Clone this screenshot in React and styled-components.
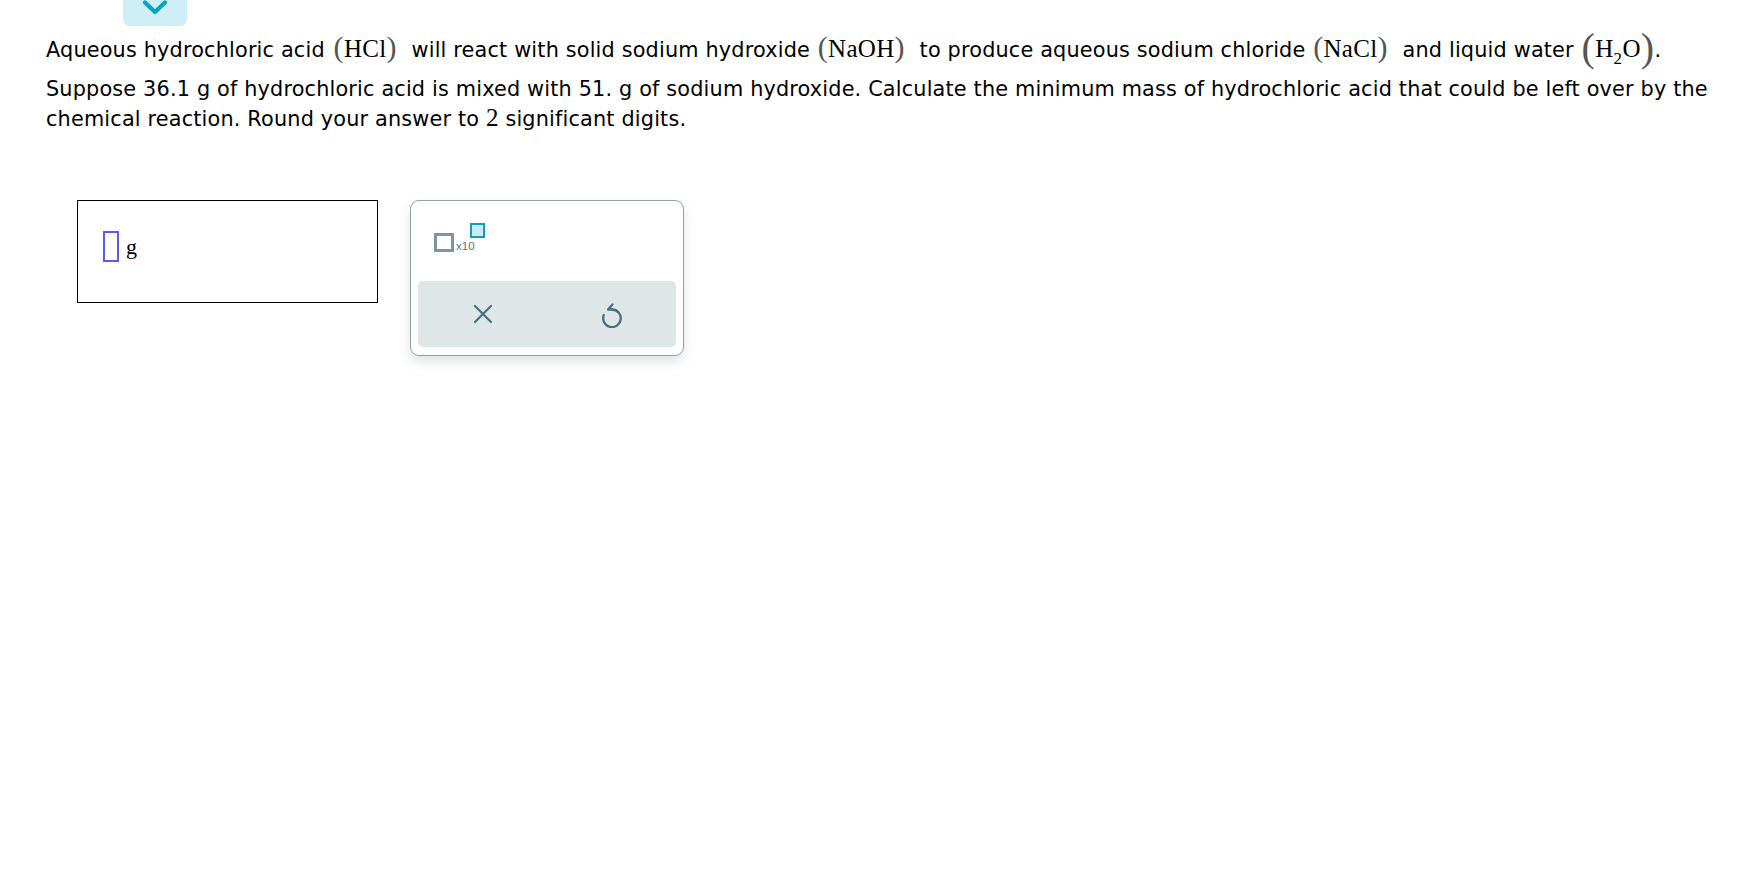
import React from 'react';
import styled, { createGlobalStyle } from 'styled-components';

const GlobalStyle = createGlobalStyle`
  html, body {
    margin: 0;
    padding: 0;
    background: #ffffff;
  }
  body {
    font-family: "DejaVu Sans", Verdana, sans-serif;
    color: #000000;
  }
`;

const Page = styled.div`
  display: flex;
  flex-direction: column;
  padding: 0 10px 0 46px;
  min-height: 873px;
  box-sizing: border-box;
`;

const TopBar = styled.div`
  display: flex;
  height: 26px;
  padding-left: 77px;
`;

const ToggleTab = styled.button`
  width: 64px;
  height: 26px;
  border: none;
  padding: 0;
  background: #cdeef4;
  border-radius: 0 0 7px 7px;
  display: flex;
  align-items: flex-start;
  justify-content: center;
  cursor: pointer;
`;

const Line = styled.div`
  font-size: 20.8px;
  letter-spacing: 0.17px;
  line-height: ${p => p.$lh || 30}px;
  margin-top: ${p => p.$mt || 0}px;
  white-space: nowrap;
`;

const Math = styled.span`
  font-family: "Liberation Serif", "Times New Roman", serif;
  font-size: 25px;
  letter-spacing: 0.3px;
  line-height: 0;
  margin: 0 ${p => p.$mr ?? 8}px 0 ${p => p.$ml ?? 3}px;
`;

const Paren = styled.span`
  font-size: ${p => (p.$big ? 40 : 30)}px;
  color: #555555;
  vertical-align: ${p => (p.$big ? -4 : 0)}px;
`;

const Sub = styled.span`
  font-size: 17px;
  vertical-align: -7px;
`;

const Num = styled.span`
  font-family: "Liberation Serif", "Times New Roman", serif;
  font-size: 25px;
  line-height: 0;
`;

const AnswerRow = styled.div`
  display: flex;
  align-items: flex-start;
  gap: 32px;
  margin: 66px 0 0 31px;
`;

const AnswerBox = styled.div`
  width: 301px;
  height: 103px;
  box-sizing: border-box;
  border: 1px solid #000000;
  display: flex;
  align-items: flex-start;
  padding: 30px 0 0 25px;
`;

const Slot = styled.span`
  display: block;
  width: 16px;
  height: 31px;
  box-sizing: border-box;
  border: 2px solid #5b5bf7;
`;

const Unit = styled.span`
  font-family: "Liberation Serif", "Times New Roman", serif;
  font-size: 22px;
  line-height: 1;
  margin: 5px 0 0 7px;
`;

const Panel = styled.div`
  width: 274px;
  height: 156px;
  box-sizing: border-box;
  border: 1px solid #8ea3ab;
  border-radius: 9px;
  background: #ffffff;
  box-shadow: 0 6px 12px rgba(40, 60, 70, 0.14);
  display: flex;
  flex-direction: column;
  justify-content: space-between;
  padding: 22px 7px 8px 7px;
`;

const PowerButton = styled.button`
  display: flex;
  align-items: flex-start;
  border: none;
  background: none;
  padding: 0 0 0 16px;
  cursor: pointer;
`;

const BaseBox = styled.span`
  display: block;
  width: 20px;
  height: 19px;
  box-sizing: border-box;
  border: 3px solid #7d959e;
  margin-top: 10px;
`;

const PowerText = styled.span`
  font-family: "Liberation Sans", Arial, sans-serif;
  font-size: 11.5px;
  line-height: 1;
  color: #587480;
  margin: 18px 0 0 2px;
`;

const ExpBox = styled.span`
  display: block;
  width: 15px;
  height: 15px;
  box-sizing: border-box;
  border: 2px solid #159cb6;
  background: #c7edf3;
  margin-left: -5px;
`;

const ActionBar = styled.div`
  display: flex;
  height: 66px;
  background: #dfe6e8;
  border-radius: 5px;
`;

const ActionButton = styled.button`
  flex: 1;
  display: flex;
  align-items: center;
  justify-content: center;
  border: none;
  background: none;
  padding: 0;
  cursor: pointer;
`;

const Chem = ({ children, big, ml, mr }) => (
  <Math $ml={ml} $mr={mr}>
    <Paren $big={big}>(</Paren>
    {children}
    <Paren $big={big}>)</Paren>
  </Math>
);

export default function App() {
  return (
    <>
      <GlobalStyle />
      <Page>
        <TopBar>
          <ToggleTab aria-label="collapse">
            <svg width="28" height="18" viewBox="0 0 28 18">
              <polyline points="4,2.5 14,12 24,2.5" fill="none" stroke="#0aa2c6" strokeWidth="4.2" strokeLinecap="round" strokeLinejoin="round" />
            </svg>
          </ToggleTab>
        </TopBar>

        <Line $lh={40} $mt={4}>
          Aqueous hydrochloric acid <Chem ml={2} mr={8}>HCl</Chem> will react with solid sodium hydroxide <Chem ml={1} mr={8}>NaOH</Chem> to produce aqueous sodium chloride <Chem ml={1} mr={8}>NaCl</Chem> and liquid water <Chem big ml={1} mr={0}>H<Sub>2</Sub>O</Chem>.
        </Line>
        <Line $mt={4}>
          Suppose 36.1 g of hydrochloric acid is mixed with 51. g of sodium hydroxide. Calculate the minimum mass of hydrochloric acid that could be left over by the
        </Line>
        <Line>
          chemical reaction. Round your answer to <Num>2</Num> significant digits.
        </Line>

        <AnswerRow>
          <AnswerBox>
            <Slot />
            <Unit>g</Unit>
          </AnswerBox>
          <Panel>
            <PowerButton aria-label="x10">
              <BaseBox />
              <PowerText>x10</PowerText>
              <ExpBox />
            </PowerButton>
            <ActionBar>
              <ActionButton aria-label="clear">
                <svg width="20" height="20" viewBox="0 0 20 20">
                  <path d="M2 2 L18 18 M18 2 L2 18" stroke="#46707e" strokeWidth="2.2" strokeLinecap="round" fill="none" />
                </svg>
              </ActionButton>
              <ActionButton aria-label="undo">
                <svg width="22" height="27" viewBox="0 0 22 27">
                  <path d="M11 8.5 A8.8 8.8 0 1 1 2.8 14" stroke="#46707e" strokeWidth="2.3" strokeLinecap="round" fill="none" />
                  <path d="M11.5 3.5 L7 8.5 L11 8.5" stroke="#46707e" strokeWidth="2.3" strokeLinecap="round" strokeLinejoin="round" fill="none" />
                </svg>
              </ActionButton>
            </ActionBar>
          </Panel>
        </AnswerRow>
      </Page>
    </>
  );
}
